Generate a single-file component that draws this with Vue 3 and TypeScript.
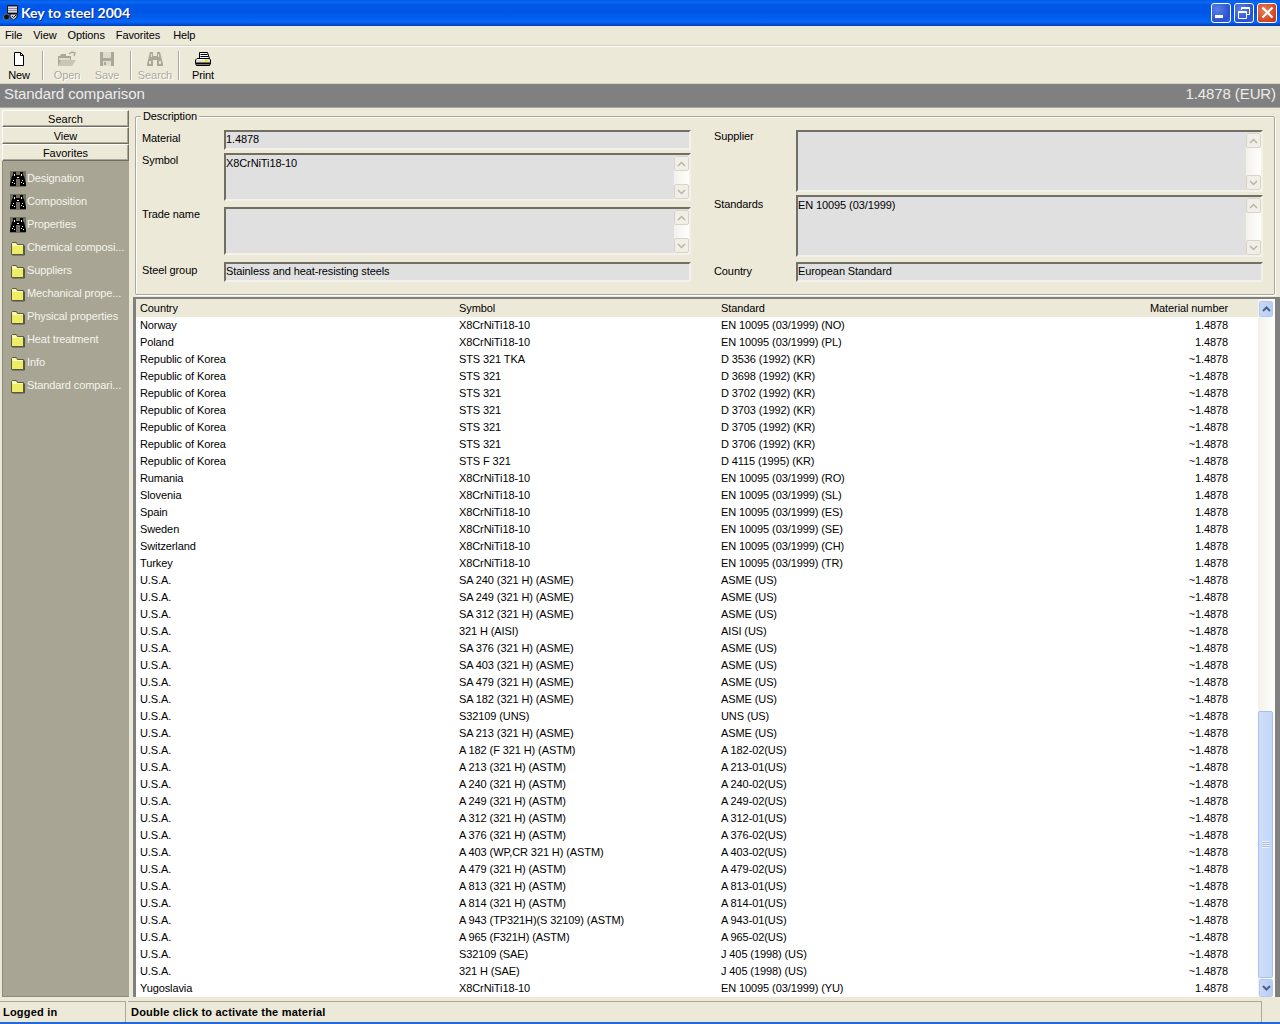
<script setup lang="ts">
const menus: string[] = ['File', 'View', 'Options', 'Favorites', 'Help']
type SideItem = { label: string; kind: 'bin' | 'folder' }
const sideItems: SideItem[] = [
  { label: 'Designation', kind: 'bin' },
  { label: 'Composition', kind: 'bin' },
  { label: 'Properties', kind: 'bin' },
  { label: 'Chemical composi...', kind: 'folder' },
  { label: 'Suppliers', kind: 'folder' },
  { label: 'Mechanical prope...', kind: 'folder' },
  { label: 'Physical properties', kind: 'folder' },
  { label: 'Heat treatment', kind: 'folder' },
  { label: 'Info', kind: 'folder' },
  { label: 'Standard compari...', kind: 'folder' },
]
const x8 = 'X8CrNiTi18-10'
const en = 'EN 10095 (03/1999)'
const rows: [string, string, string, string][] = [
  ['Norway', x8, en + ' (NO)', '1.4878'],
  ['Poland', x8, en + ' (PL)', '1.4878'],
  ['Republic of Korea', 'STS 321 TKA', 'D 3536 (1992) (KR)', '~1.4878'],
  ['Republic of Korea', 'STS 321', 'D 3698 (1992) (KR)', '~1.4878'],
  ['Republic of Korea', 'STS 321', 'D 3702 (1992) (KR)', '~1.4878'],
  ['Republic of Korea', 'STS 321', 'D 3703 (1992) (KR)', '~1.4878'],
  ['Republic of Korea', 'STS 321', 'D 3705 (1992) (KR)', '~1.4878'],
  ['Republic of Korea', 'STS 321', 'D 3706 (1992) (KR)', '~1.4878'],
  ['Republic of Korea', 'STS F 321', 'D 4115 (1995) (KR)', '~1.4878'],
  ['Rumania', x8, en + ' (RO)', '1.4878'],
  ['Slovenia', x8, en + ' (SL)', '1.4878'],
  ['Spain', x8, en + ' (ES)', '1.4878'],
  ['Sweden', x8, en + ' (SE)', '1.4878'],
  ['Switzerland', x8, en + ' (CH)', '1.4878'],
  ['Turkey', x8, en + ' (TR)', '1.4878'],
  ['U.S.A.', 'SA 240 (321 H) (ASME)', 'ASME (US)', '~1.4878'],
  ['U.S.A.', 'SA 249 (321 H) (ASME)', 'ASME (US)', '~1.4878'],
  ['U.S.A.', 'SA 312 (321 H) (ASME)', 'ASME (US)', '~1.4878'],
  ['U.S.A.', '321 H (AISI)', 'AISI (US)', '~1.4878'],
  ['U.S.A.', 'SA 376 (321 H) (ASME)', 'ASME (US)', '~1.4878'],
  ['U.S.A.', 'SA 403 (321 H) (ASME)', 'ASME (US)', '~1.4878'],
  ['U.S.A.', 'SA 479 (321 H) (ASME)', 'ASME (US)', '~1.4878'],
  ['U.S.A.', 'SA 182 (321 H) (ASME)', 'ASME (US)', '~1.4878'],
  ['U.S.A.', 'S32109 (UNS)', 'UNS (US)', '~1.4878'],
  ['U.S.A.', 'SA 213 (321 H) (ASME)', 'ASME (US)', '~1.4878'],
  ['U.S.A.', 'A 182 (F 321 H) (ASTM)', 'A 182-02(US)', '~1.4878'],
  ['U.S.A.', 'A 213 (321 H) (ASTM)', 'A 213-01(US)', '~1.4878'],
  ['U.S.A.', 'A 240 (321 H) (ASTM)', 'A 240-02(US)', '~1.4878'],
  ['U.S.A.', 'A 249 (321 H) (ASTM)', 'A 249-02(US)', '~1.4878'],
  ['U.S.A.', 'A 312 (321 H) (ASTM)', 'A 312-01(US)', '~1.4878'],
  ['U.S.A.', 'A 376 (321 H) (ASTM)', 'A 376-02(US)', '~1.4878'],
  ['U.S.A.', 'A 403 (WP,CR 321 H) (ASTM)', 'A 403-02(US)', '~1.4878'],
  ['U.S.A.', 'A 479 (321 H) (ASTM)', 'A 479-02(US)', '~1.4878'],
  ['U.S.A.', 'A 813 (321 H) (ASTM)', 'A 813-01(US)', '~1.4878'],
  ['U.S.A.', 'A 814 (321 H) (ASTM)', 'A 814-01(US)', '~1.4878'],
  ['U.S.A.', 'A 943 (TP321H)(S 32109) (ASTM)', 'A 943-01(US)', '~1.4878'],
  ['U.S.A.', 'A 965 (F321H) (ASTM)', 'A 965-02(US)', '~1.4878'],
  ['U.S.A.', 'S32109 (SAE)', 'J 405 (1998) (US)', '~1.4878'],
  ['U.S.A.', '321 H (SAE)', 'J 405 (1998) (US)', '~1.4878'],
  ['Yugoslavia', x8, en + ' (YU)', '1.4878'],
]
</script>

<template>
  <div class="win">
    <header class="title">
      <svg class="appicon" width="16" height="17" viewBox="0 0 16 17">
        <path d="M4.500 1.500h10v8h-10z" fill="#8c8c98" stroke="#101018" />
        <path d="M5 3.500h9M5 5.500h9M5 7.500h9" stroke="#dcdce8" />
        <path d="M4 10v2" stroke="#222" />
        <circle cx="3.500" cy="13" r="3" fill="#111" stroke="#9a9aa8" stroke-width=".6" />
        <path d="M7 10h7v3l-3.500 3L7 13z" fill="#d4d4dc" stroke="#111" />
        <path d="M9 12l1.500 1.500L13 11" fill="none" stroke="#111" />
      </svg>
      <span class="title-text">Key to steel 2004</span>
      <div class="caps">
        <div class="cap"><span class="cap-min"></span></div>
        <div class="cap">
          <svg width="14" height="14" viewBox="0 0 14 14" fill="none" stroke="#fff">
            <path d="M4.500 4V1.500h8v7H10" />
            <path d="M4.500 2h8" stroke-width="2" />
            <path d="M1.500 5.500h8v7h-8z" />
            <path d="M1.500 6h8" stroke-width="2" />
          </svg>
        </div>
        <div class="cap cap-close">
          <svg width="13" height="13" viewBox="0 0 13 13" stroke="#fff" stroke-width="2.200">
            <path d="M1.500 1.500l10 10M11.500 1.500l-10 10" />
          </svg>
        </div>
      </div>
    </header>

    <nav class="menu">
      <span v-for="m in menus" :key="m" class="menu-item">{{ m }}</span>
    </nav>

    <div class="toolbar">
      <div class="tool tool-first">
        <svg width="16" height="18" viewBox="0 0 16 18" fill="#fff" stroke="#000">
          <path d="M3.500 1.500h6l3 3v10h-9zM9.500 1.500v3h3" />
        </svg>
        <span>New</span>
      </div>
      <i class="sep"></i>
      <div class="tool off">
        <svg width="20" height="18" viewBox="0 0 20 18">
          <path d="M1 5h2l1-2h5v2h5v10H1z" fill="#aca899" />
          <path d="M2 7h11v2H2z" fill="#dedbcd" />
          <path d="M4 9h15l-4 6H1z" fill="#c9c6b6" />
          <path d="M12 3l3-2 3 1-1 3" fill="none" stroke="#aca899" stroke-width="1.400" />
        </svg>
        <span>Open</span>
      </div>
      <div class="tool off">
        <svg width="16" height="18" viewBox="0 0 16 18">
          <path d="M1 1h14v14H1z" fill="#aca899" />
          <path d="M4 1h8v6H4z" fill="#dedbcd" />
          <path d="M4 10h8v5H4z" fill="#dedbcd" />
          <path d="M5 11h2v3H5z" fill="#aca899" />
        </svg>
        <span>Save</span>
      </div>
      <i class="sep"></i>
      <div class="tool off">
        <svg width="18" height="18" viewBox="0 0 18 18">
          <path d="M4 1h3v4h4V1h3l1 4 2 8v2h-6V9H7v6H1v-2l2-8z" fill="#aca899" />
          <path d="M3 10h2v3H3zM13 10h2v3h-2zM5 3h1v3H5zM12 3h1v3h-1z" fill="#e4e1d3" />
        </svg>
        <span>Search</span>
      </div>
      <i class="sep"></i>
      <div class="tool">
        <svg width="18" height="18" viewBox="0 0 18 18">
          <path d="M5.500 1.500h8l2 6h-10z" fill="#fff" stroke="#000" />
          <path d="M6.500 3.500h7M6.500 5.500h8" stroke="#000" />
          <path d="M3 7.500h12.500l1 1.500v3H1.500V9z" fill="#e4e0d0" stroke="#000" />
          <path d="M1.500 12.500h15l-1 2h-13z" fill="#77756a" stroke="#000" />
          <path d="M11 9h3v2h-3z" fill="#e6e62a" />
          <path d="M3 8.500h7" stroke="#fff" />
        </svg>
        <span>Print</span>
      </div>
    </div>

    <div class="band">
      <span>Standard comparison</span>
      <span>1.4878 (EUR)</span>
    </div>

    <main class="main">
      <aside class="side">
        <div class="sbtn">Search</div>
        <div class="sbtn">View</div>
        <div class="sbtn">Favorites</div>
        <ul class="sitems">
          <li v-for="s in sideItems" :key="s.label" class="sitem">
            <svg v-if="s.kind === 'bin'" class="sicon" width="16" height="16" viewBox="0 0 16 16">
              <path d="M0 0h16v16H0z" fill="#737062" />
              <path d="M3 1h3v3h4V1h3v3l1 1 2 8v2h-6V8H6v7H0v-2l2-8 1-1z" fill="#000" />
              <path d="M2 11h1v1H2zM4 12h1v1H4zM3 9h1v1H3zM11 11h1v1h-1zM13 12h1v1h-1zM12 9h1v1h-1zM7 6h2v1H7zM4 3h1v2H4zM11 3h1v2h-1z" fill="#fff" />
            </svg>
            <svg v-else class="sicon" width="16" height="16" viewBox="0 0 16 16">
              <path d="M1.500 14.500v-11l1-1h4l1 2h6v10z" fill="#eeee66" stroke="#5a5a3a" />
              <path d="M2 4h4" stroke="#fff" />
              <path d="M2.500 5.500h10.500" stroke="#fbfbc0" />
              <path d="M14.500 5.500v9.500h-12" fill="none" stroke="#55534a" />
            </svg>
            <span>{{ s.label }}</span>
          </li>
        </ul>
      </aside>

      <section class="content">
        <div class="desc">
          <span class="legend">Description</span>
          <div class="desc-col">
            <div class="f f-mat"><label>Material</label><div class="box">1.4878</div></div>
            <div class="f f-sym"><label>Symbol</label>
              <div class="box box-sb">X8CrNiTi18-10
                <div class="mini">
                  <b class="mb"><svg width="9" height="6" viewBox="0 0 9 6" fill="none" stroke="#b8b5a6" stroke-width="1.500"><path d="M1 5l3.500-3.500L8 5" /></svg></b>
                  <b class="mb"><svg width="9" height="6" viewBox="0 0 9 6" fill="none" stroke="#b8b5a6" stroke-width="1.500"><path d="M1 1l3.500 3.500L8 1" /></svg></b>
                </div>
              </div>
            </div>
            <div class="f f-sym f-tr"><label>Trade name</label>
              <div class="box box-sb">
                <div class="mini">
                  <b class="mb"><svg width="9" height="6" viewBox="0 0 9 6" fill="none" stroke="#b8b5a6" stroke-width="1.500"><path d="M1 5l3.500-3.500L8 5" /></svg></b>
                  <b class="mb"><svg width="9" height="6" viewBox="0 0 9 6" fill="none" stroke="#b8b5a6" stroke-width="1.500"><path d="M1 1l3.500 3.500L8 1" /></svg></b>
                </div>
              </div>
            </div>
            <div class="f f-grp"><label>Steel group</label><div class="box">Stainless and heat-resisting steels</div></div>
          </div>
          <div class="desc-col">
            <div class="f f-big f-sup"><label>Supplier</label>
              <div class="box box-sb">
                <div class="mini">
                  <b class="mb"><svg width="9" height="6" viewBox="0 0 9 6" fill="none" stroke="#b8b5a6" stroke-width="1.500"><path d="M1 5l3.500-3.500L8 5" /></svg></b>
                  <b class="mb"><svg width="9" height="6" viewBox="0 0 9 6" fill="none" stroke="#b8b5a6" stroke-width="1.500"><path d="M1 1l3.500 3.500L8 1" /></svg></b>
                </div>
              </div>
            </div>
            <div class="f f-big f-std"><label>Standards</label>
              <div class="box box-sb">EN 10095 (03/1999)
                <div class="mini">
                  <b class="mb"><svg width="9" height="6" viewBox="0 0 9 6" fill="none" stroke="#b8b5a6" stroke-width="1.500"><path d="M1 5l3.500-3.500L8 5" /></svg></b>
                  <b class="mb"><svg width="9" height="6" viewBox="0 0 9 6" fill="none" stroke="#b8b5a6" stroke-width="1.500"><path d="M1 1l3.500 3.500L8 1" /></svg></b>
                </div>
              </div>
            </div>
            <div class="f f-grp f-cty"><label>Country</label><div class="box">European Standard</div></div>
          </div>
        </div>

        <div class="tablewrap">
          <div class="table">
            <div class="row head">
              <span>Country</span><span>Symbol</span><span>Standard</span><span class="num">Material number</span>
            </div>
            <div v-for="(r, i) in rows" :key="i" class="row">
              <span>{{ r[0] }}</span><span>{{ r[1] }}</span><span>{{ r[2] }}</span><span class="num">{{ r[3] }}</span>
            </div>
          </div>
          <div class="vbar">
            <div class="arrow">
              <svg width="9" height="6" viewBox="0 0 9 6" fill="none" stroke="#4d6185" stroke-width="2"><path d="M1 5l3.500-3.500L8 5" /></svg>
            </div>
            <div class="track"><div class="thumb"><span class="grip"></span></div></div>
            <div class="arrow arrow-d">
              <svg width="9" height="6" viewBox="0 0 9 6" fill="none" stroke="#4d6185" stroke-width="2"><path d="M1 1l3.500 3.500L8 1" /></svg>
            </div>
          </div>
        </div>
      </section>
    </main>

    <footer class="status">
      <div class="st st1">Logged in</div>
      <div class="st st2">Double click to activate the material</div>
    </footer>
  </div>
</template>

<style scoped>
.win {
  width: 1280px;
  height: 1024px;
  overflow: hidden;
  display: flex;
  flex-direction: column;
  background: #ece9d8;
  color: #000;
  font: 11px/13px "Liberation Sans", Arial, sans-serif;
  letter-spacing: -0.1px;
}
.title {
  height: 26px;
  flex: none;
  display: flex;
  align-items: center;
  padding: 0 3px 1px 3px;
  box-sizing: border-box;
  background: linear-gradient(#0058e6 0, #0a6af0 2px, #0058e8 5px, #0055e5 12px, #0260f0 19px, #0a66f5 22px, #0046c8 25px, #003cb0 26px);
}
.appicon { flex: none; }
.title-text {
  margin-left: 2px;
  color: #fff;
  font: bold 14px/16px Lato, sans-serif;
  letter-spacing: 0;
  text-shadow: 1px 1px 0 #0a2a90;
}
.caps { margin-left: auto; display: flex; gap: 3px; }
.cap {
  width: 20px;
  height: 20px;
  box-sizing: border-box;
  border: 1px solid #fff;
  border-radius: 3px;
  display: flex;
  align-items: center;
  justify-content: center;
  background: radial-gradient(circle at 30% 30%, #5a80e8, #2a50d0 70%, #3c64e0);
}
.cap-close { background: radial-gradient(circle at 35% 35%, #e8805c, #d4431c 70%, #c03010); }
.cap-min { width: 8px; height: 3px; background: #fff; margin: 8px 5px 0 0; }
.menu {
  height: 19px;
  flex: none;
  display: flex;
  align-items: center;
  padding-left: 5px;
  gap: 11px;
  border-bottom: 1px solid #d5d2c2;
}
.menu-item { white-space: nowrap; }
.menu-item:last-child { margin-left: 2px; }
.toolbar {
  flex: none;
  height: 38px;
  box-sizing: border-box;
  border-top: 1px solid #fff;
  border-bottom: 1px solid #d8d5c5;
  display: flex;
  align-items: stretch;
  padding-top: 4px;
}
.tool {
  width: 40px;
  display: flex;
  flex-direction: column;
  align-items: center;
}
.tool-first { margin-left: -1px; }
.tool svg { display: block; }
.tool.off { color: #aca899; text-shadow: 1px 1px 0 #fff; }
.sep {
  width: 2px;
  margin: 0 3px 3px;
  box-sizing: border-box;
  border-left: 1px solid #aca899;
  border-right: 1px solid #fff;
}
.band {
  flex: none;
  height: 23px;
  box-sizing: content-box;
  display: flex;
  justify-content: space-between;
  align-items: flex-start;
  padding: 0 4px;
  background: #808080;
  color: #ececec;
  font-size: 15px;
  line-height: 19px;
  border-bottom: 1px solid #aaa89c;
}
.main {
  flex: 1;
  min-height: 0;
  display: flex;
  padding-bottom: 3px;
}
.side {
  flex: none;
  width: 127px;
  margin: 2px 3px 0 2px;
  display: flex;
  flex-direction: column;
}
.sbtn {
  height: 17px;
  flex: none;
  box-sizing: border-box;
  border: 1px solid;
  border-color: #fff #716f64 #716f64 #fff;
  box-shadow: inset -1px -1px 0 #aca899;
  text-align: center;
  line-height: 16px;
  letter-spacing: 0;
}
.sitems {
  list-style: none;
  margin: 0;
  padding: 6px 0 0 7px;
  flex: 1;
  background: #a8a595;
  border-left: 1px solid #8d8b7e;
  border-bottom: 1px solid #8d8b7e;
  color: #f4f4ec;
}
.sitem {
  height: 23px;
  display: flex;
  align-items: center;
  gap: 1px;
  white-space: nowrap;
}
.sicon { flex: none; }
.content {
  flex: 1;
  min-width: 0;
  display: flex;
  flex-direction: column;
}
.desc {
  flex: none;
  box-sizing: border-box;
  height: 179px;
  margin: 8px 5px 0 3px;
  padding: 13px 0 0 6px;
  border: 1px solid #aca899;
  box-shadow: 1px 1px 0 #fff, inset 1px 1px 0 #fff;
  border-radius: 2px;
  position: relative;
  display: flex;
}
.legend {
  position: absolute;
  left: 5px;
  top: -7px;
  padding: 0 2px;
  background: #ece9d8;
  line-height: 13px;
}
.desc-col {
  flex: none;
  width: 572px;
}
.f { display: flex; }
.f label { flex: none; width: 82px; padding-top: 2px; line-height: 13px; }
.box {
  flex: none;
  width: 467px;
  box-sizing: border-box;
  height: 20px;
  padding: 1px 0 0 0;
  background: #e0e0e0;
  border: 2px solid;
  border-color: #716f64 #f4f2e8 #f4f2e8 #716f64;
  white-space: pre-line;
  position: relative;
}
.box-sb { padding-top: 2px; }
.f-sym { margin-top: 3px; }
.f-sym .box { height: 48px; }
.f-sym label { padding-top: 1px; }
.f-tr { margin-top: 6px; }
.f-grp { margin-top: 7px; }
.f-big .box { height: 62px; }
.f-sup label { padding-top: 0; }
.f-std { margin-top: 3px; }
.f-std label { padding-top: 3px; }
.f-cty { margin-top: 5px; }
.f-cty label { padding-top: 3px; }
.mini {
  position: absolute;
  top: 1px;
  right: 0;
  bottom: 0;
  width: 15px;
  display: flex;
  flex-direction: column;
  justify-content: space-between;
  background: linear-gradient(90deg, #f3f1ec, #fefefb);
}
.mb {
  height: 15px;
  flex: none;
  box-sizing: border-box;
  border: 1px solid #d8d5c8;
  border-radius: 2px;
  background: #f0eee6;
  display: flex;
  align-items: center;
  justify-content: center;
}
.tablewrap {
  flex: 1;
  min-height: 0;
  display: flex;
  margin: 2px 0 0 1px;
  box-sizing: border-box;
  border: solid #808080;
  border-width: 2px 5px 0 3px;
  overflow: hidden;
}
.table {
  flex: 1;
  min-width: 0;
  background: #fff;
}
.row {
  height: 17px;
  display: grid;
  grid-template-columns: 319px 262px 381px 126px;
  line-height: 17px;
  white-space: nowrap;
  padding-left: 4px;
}
.head {
  height: 18px;
  line-height: 18px;
  background: #ece9d8;
}
.num { text-align: right; }
.vbar {
  width: 17px;
  flex: none;
  display: flex;
  flex-direction: column;
  background: linear-gradient(90deg, #f3f1ec, #fefefb);
  padding-top: 2px;
}
.arrow {
  height: 16px;
  flex: none;
  box-sizing: border-box;
  margin: 0 2px 0 1px;
  border: 1px solid #fff;
  border-radius: 2px;
  outline: 1px solid #b4c8f0;
  outline-offset: -1px;
  background: linear-gradient(90deg, #c8d8f8, #b8ccf4);
  display: flex;
  align-items: center;
  justify-content: center;
}
.arrow-d { height: 18px; }
.track {
  flex: 1;
  min-height: 0;
  display: flex;
  flex-direction: column;
  justify-content: flex-end;
  padding-bottom: 1px;
}
.thumb {
  height: 267px;
  margin: 0 2px 0 0;
  box-sizing: border-box;
  border: 1px solid #fff;
  outline: 1px solid #a8c0ec;
  outline-offset: -1px;
  border-radius: 2px;
  background: linear-gradient(90deg, #cfdffa, #c3d6f8);
  display: flex;
  align-items: center;
  justify-content: center;
}
.grip {
  width: 7px;
  height: 7px;
  background: repeating-linear-gradient(#eef3fd 0 1px, #a8bce4 1px 2px);
}
.status {
  flex: none;
  height: 24px;
  display: flex;
  box-sizing: border-box;
  border-bottom: 2px solid #1f6ad8;
  font-weight: bold;
  letter-spacing: 0.2px;
  padding-top: 1px;
}
.st {
  box-sizing: border-box;
  border-top: 1px solid #aca899;
  line-height: 20px;
  white-space: nowrap;
}
.st1 { width: 126px; padding-left: 3px; border-right: 1px solid #aca899; }
.st2 { width: 1134px; margin-left: 2px; padding-left: 3px; border-right: 1px solid #aca899; }
</style>

<style>
html, body { margin: 0; background: #ece9d8; }
</style>
